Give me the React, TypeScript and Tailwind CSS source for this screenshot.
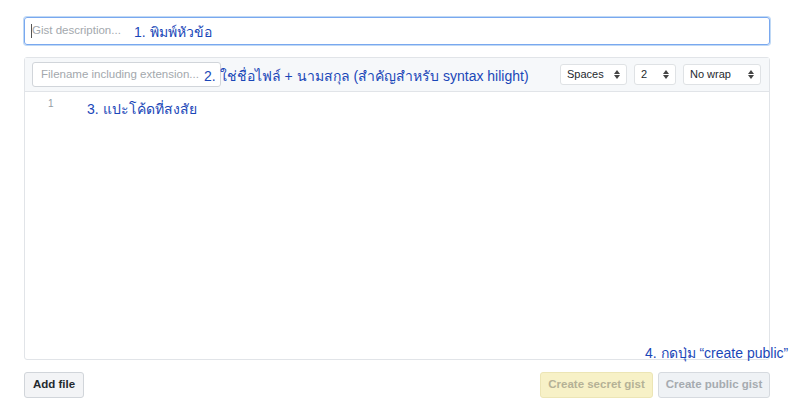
const font = { fontFamily: '"Liberation Sans", "Noto Sans", sans-serif' };

function Select({ label, w }: { label: string; w: string }) {
  return (
    <div className={`${w} h-[21px] flex items-center justify-between pl-[6px] pr-[6px] bg-white border border-[#dfe2e5] rounded-[3px] text-[11px] text-[#24292e]`}>
      <span>{label}</span>
      <span className="flex flex-col items-center leading-none">
        <span className="block w-0 h-0 border-l-[3px] border-r-[3px] border-b-[4px] border-l-transparent border-r-transparent border-b-[#444]" />
        <span className="block w-0 h-0 mt-[1px] border-l-[3px] border-r-[3px] border-t-[4px] border-l-transparent border-r-transparent border-t-[#444]" />
      </span>
    </div>
  );
}

export default function App() {
  return (
    <div className="relative w-[800px] h-[418px] bg-white" style={font}>
      <div className="w-[746px] ml-[24px] pt-[17px]">
        {/* description */}
        <div className="relative h-[28px] border border-[#79a8ef] rounded-[3px] shadow-[0_0_0_1px_rgba(3,102,214,0.25)] flex items-center pl-[6px]">
          <span className="w-px h-[14px] bg-[#555]" />
          <span className="text-[11.5px] text-[#a3a8ad]">Gist description...</span>
          <span className="absolute left-[109px] top-[4px] text-[14px] text-[#1a47b8]">1. พิมพ์หัวข้อ</span>
        </div>

        {/* file box */}
        <div className="mt-[12px] h-[303px] border border-[#e1e4e8] rounded-[3px] flex flex-col">
          <div className="relative h-[34px] bg-[#f6f8fa] border-b border-[#e1e4e8] flex items-center pl-[7px] pr-[8px]">
            <div className="w-[189px] h-[25px] bg-white border border-[#d1d5da] rounded-[3px] flex items-center px-[8px] text-[11.5px] text-[#a3a8ad] whitespace-nowrap overflow-hidden">
              Filename including extension...
            </div>
            <span className="absolute left-[179px] top-[8px] text-[14px] text-[#1a47b8] whitespace-nowrap">
              2. ใช่ชื่อไฟล์ + นามสกุล (สำคัญสำหรับ syntax hilight)
            </span>
            <div className="ml-auto flex gap-[7px]">
              <Select label="Spaces" w="w-[67px]" />
              <Select label="2" w="w-[42px]" />
              <Select label="No wrap" w="w-[78px]" />
            </div>
          </div>
          <div className="relative flex-1">
            <span className="absolute left-[23px] top-[4px] text-[10px] text-[#959da5]">1</span>
            <span className="absolute left-[62px] top-[7px] text-[14px] text-[#1a47b8]">3. แปะโค้ดที่สงสัย</span>
          </div>
        </div>

        {/* buttons */}
        <div className="mt-[12px] flex items-center">
          <button className="h-[26px] w-[60px] text-[11.5px] font-bold text-[#24292e] bg-[#f3f4f6] border border-[#d1d5da] rounded-[3px]">
            Add file
          </button>
          <div className="ml-auto flex gap-[5px]">
            <button className="h-[26px] w-[113px] text-[11.5px] font-bold text-[#b5b196] bg-[#f7f1c7] border border-[#ece5b5] rounded-[3px]">
              Create secret gist
            </button>
            <button className="h-[26px] w-[112px] text-[11.5px] font-bold text-[#a6abb0] bg-[#eff2f5] border border-[#d6dadf] rounded-[3px]">
              Create public gist
            </button>
          </div>
        </div>
      </div>
      <span className="absolute left-[645px] top-[343px] text-[14px] text-[#1a47b8] whitespace-nowrap">
        4. กดปุ่ม “create public”
      </span>
    </div>
  );
}
